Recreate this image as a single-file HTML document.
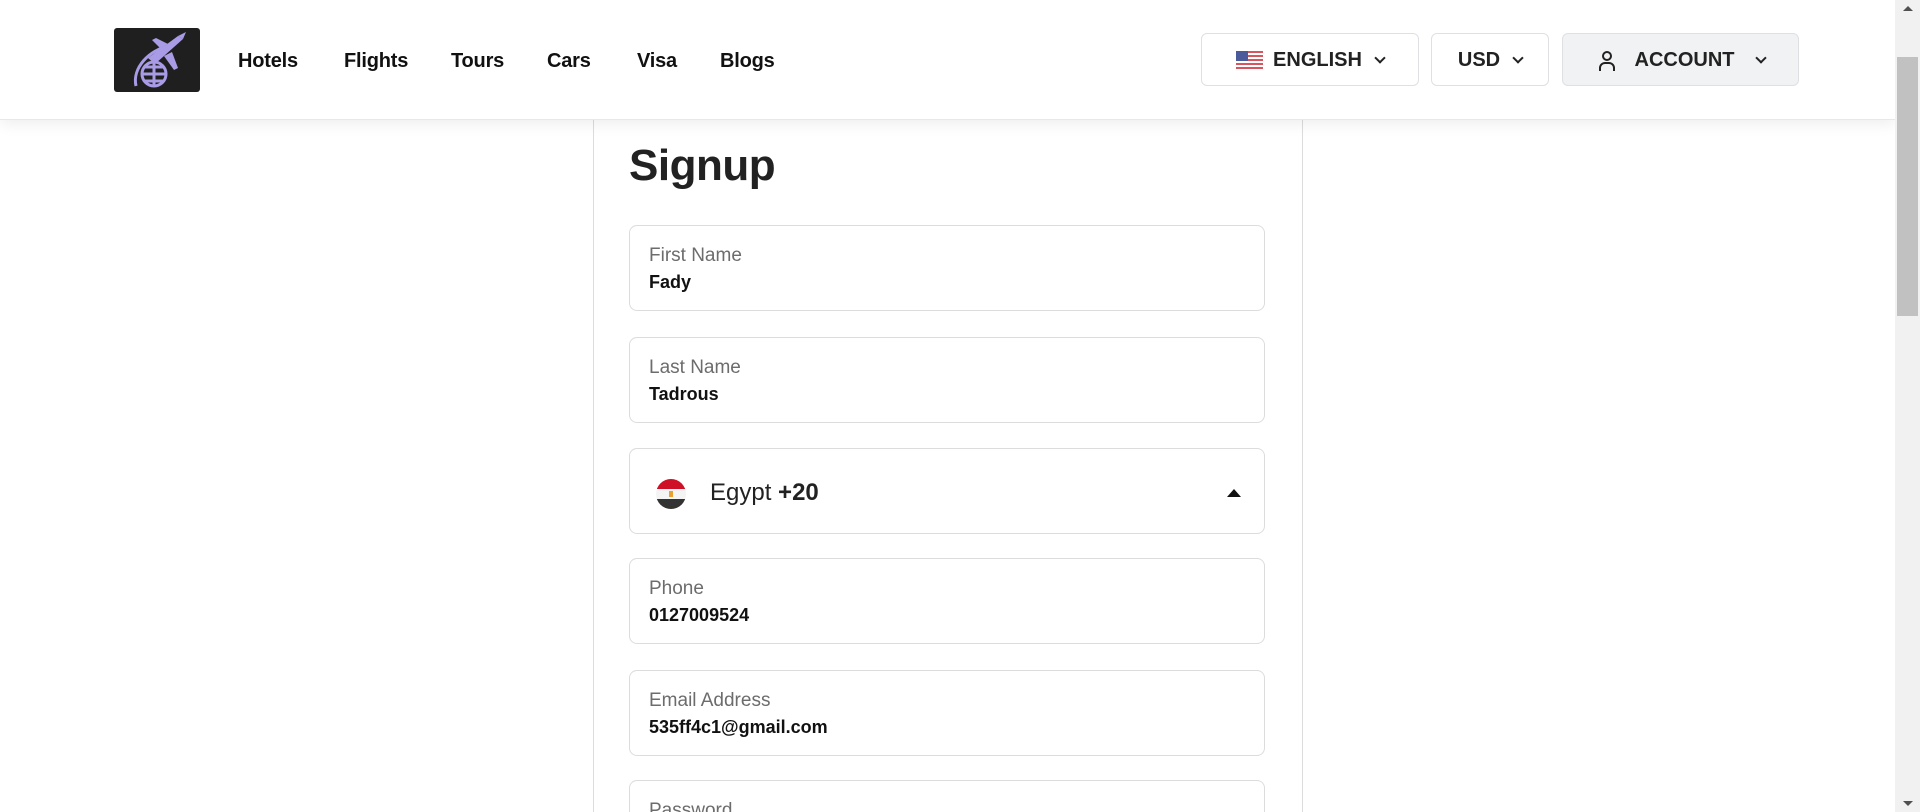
<!DOCTYPE html>
<html><head><meta charset="utf-8"><style>
*{box-sizing:border-box;margin:0;padding:0}
html,body{width:1920px;height:812px;overflow:hidden}
body{background:#fff;font-family:"Liberation Sans",Arial,sans-serif;color:#111;position:relative}
.hdr{position:absolute;left:0;top:0;width:1895px;height:120px;background:#fff;box-shadow:0 4px 14px rgba(0,0,0,.07);border-bottom:1px solid #e8e8e8;z-index:2}
.logo{position:absolute;left:114px;top:28px;width:86px;height:64px;background:#1f1f1f;border-radius:3px;overflow:hidden}
.nav{position:absolute;top:50px;font-size:20px;font-weight:600;color:#111;letter-spacing:-.2px}
.btn{position:absolute;top:33px;height:53px;border:1px solid #dfe0e4;border-radius:6px;background:#fff;font-size:20px;font-weight:600;color:#222;display:flex;align-items:center;justify-content:center;gap:10px;padding-top:2px}
.chev{width:8px;height:8px;border-right:2px solid #222;border-bottom:2px solid #222;transform:rotate(45deg);margin-top:-5px;margin-left:4px}
.card{position:absolute;left:593px;top:120px;width:710px;height:692px;border-left:1px solid #dcdcdc;border-right:1px solid #dcdcdc}
h1{position:absolute;left:629px;top:141px;font-size:44px;font-weight:700;color:#222;letter-spacing:-.5px}
.f{position:absolute;left:629px;width:636px;height:86px;border:1px solid #dcdcdc;border-radius:8px;background:#fff}
.f .l{position:absolute;left:19px;top:19px;font-size:19px;color:#6c6c6c}
.f .v{position:absolute;left:19px;top:46px;font-size:18px;font-weight:700;color:#111}
.sb{position:absolute;right:0;top:0;width:25px;height:812px;background:#f1f1f1;z-index:3}
.thumb{position:absolute;left:2px;top:57px;width:21px;height:259px;background:#c1c1c1}
</style></head><body>
<div class="hdr">
 <div class="logo"><svg width="86" height="64" viewBox="0 0 86 64"><g fill="none" stroke="#a99be6" stroke-width="3"><circle cx="40" cy="46" r="12"/><path d="M28 46h24M40 34v24M31 39h18M31 53h18"/><path d="M22 58C18 40 35 22 55 18"/></g><g fill="#a99be6"><path d="M34 30l30-22 5 3-28 25z"/><path d="M46 20l-8-8 4-2 12 6z"/><path d="M50 28l10 14 4-2-6-16z"/><path d="M64 8l8-4-3 7z"/></g></svg></div>
 <div class="nav" style="left:238px">Hotels</div>
 <div class="nav" style="left:344px">Flights</div>
 <div class="nav" style="left:451px">Tours</div>
 <div class="nav" style="left:547px">Cars</div>
 <div class="nav" style="left:637px">Visa</div>
 <div class="nav" style="left:720px">Blogs</div>
 <div class="btn" style="left:1201px;width:218px"><svg width="27" height="20" viewBox="0 0 27 20"><rect width="27" height="20" fill="#fff"/><g fill="#d8555e"><rect y="0" width="27" height="2"/><rect y="4" width="27" height="2"/><rect y="8" width="27" height="2"/><rect y="12" width="27" height="2"/><rect y="16" width="27" height="2"/></g><rect width="12" height="10" fill="#4a5a9a"/></svg><span>ENGLISH</span><span class="chev"></span></div>
 <div class="btn" style="left:1431px;width:118px"><span>USD</span><span class="chev"></span></div>
 <div class="btn" style="left:1562px;width:237px;background:#f1f2f4;gap:18px"><svg width="20" height="22" viewBox="0 0 20 22" fill="none" stroke="#222" stroke-width="2"><circle cx="10" cy="6" r="4"/><path d="M3 21v-3a5 5 0 0 1 5-5h4a5 5 0 0 1 5 5v3"/></svg><span>ACCOUNT</span><span class="chev"></span></div>
</div>
<div class="card"></div>
<h1>Signup</h1>
<div class="f" style="top:225px"><div class="l">First Name</div><div class="v">Fady</div></div>
<div class="f" style="top:337px"><div class="l">Last Name</div><div class="v">Tadrous</div></div>
<div class="f" style="top:448px"><svg style="position:absolute;left:26px;top:30px" width="30" height="30" viewBox="0 0 30 30"><defs><clipPath id="c"><circle cx="15" cy="15" r="15"/></clipPath></defs><g clip-path="url(#c)"><rect width="30" height="10" fill="#ce1126"/><rect y="10" width="30" height="10" fill="#f4f4f4"/><rect y="20" width="30" height="10" fill="#333"/><rect x="13" y="12" width="4" height="6" fill="#e8a030"/></g></svg><div style="position:absolute;left:80px;top:30px;font-size:24px;color:#222">Egypt <b>+20</b></div><div style="position:absolute;left:597px;top:40px;width:0;height:0;border-left:7px solid transparent;border-right:7px solid transparent;border-bottom:8px solid #111"></div></div>
<div class="f" style="top:558px"><div class="l">Phone</div><div class="v">0127009524</div></div>
<div class="f" style="top:670px"><div class="l">Email Address</div><div class="v">535ff4c1@gmail.com</div></div>
<div class="f" style="top:780px;height:32px;border-bottom:none;border-radius:8px 8px 0 0"><div class="l">Password</div></div>
<div class="sb"><div class="thumb"></div><div style="position:absolute;left:8px;top:6px;border-left:5px solid transparent;border-right:5px solid transparent;border-bottom:5px solid #505050"></div><div style="position:absolute;left:8px;bottom:6px;border-left:5px solid transparent;border-right:5px solid transparent;border-top:5px solid #505050"></div></div>
</body></html>
